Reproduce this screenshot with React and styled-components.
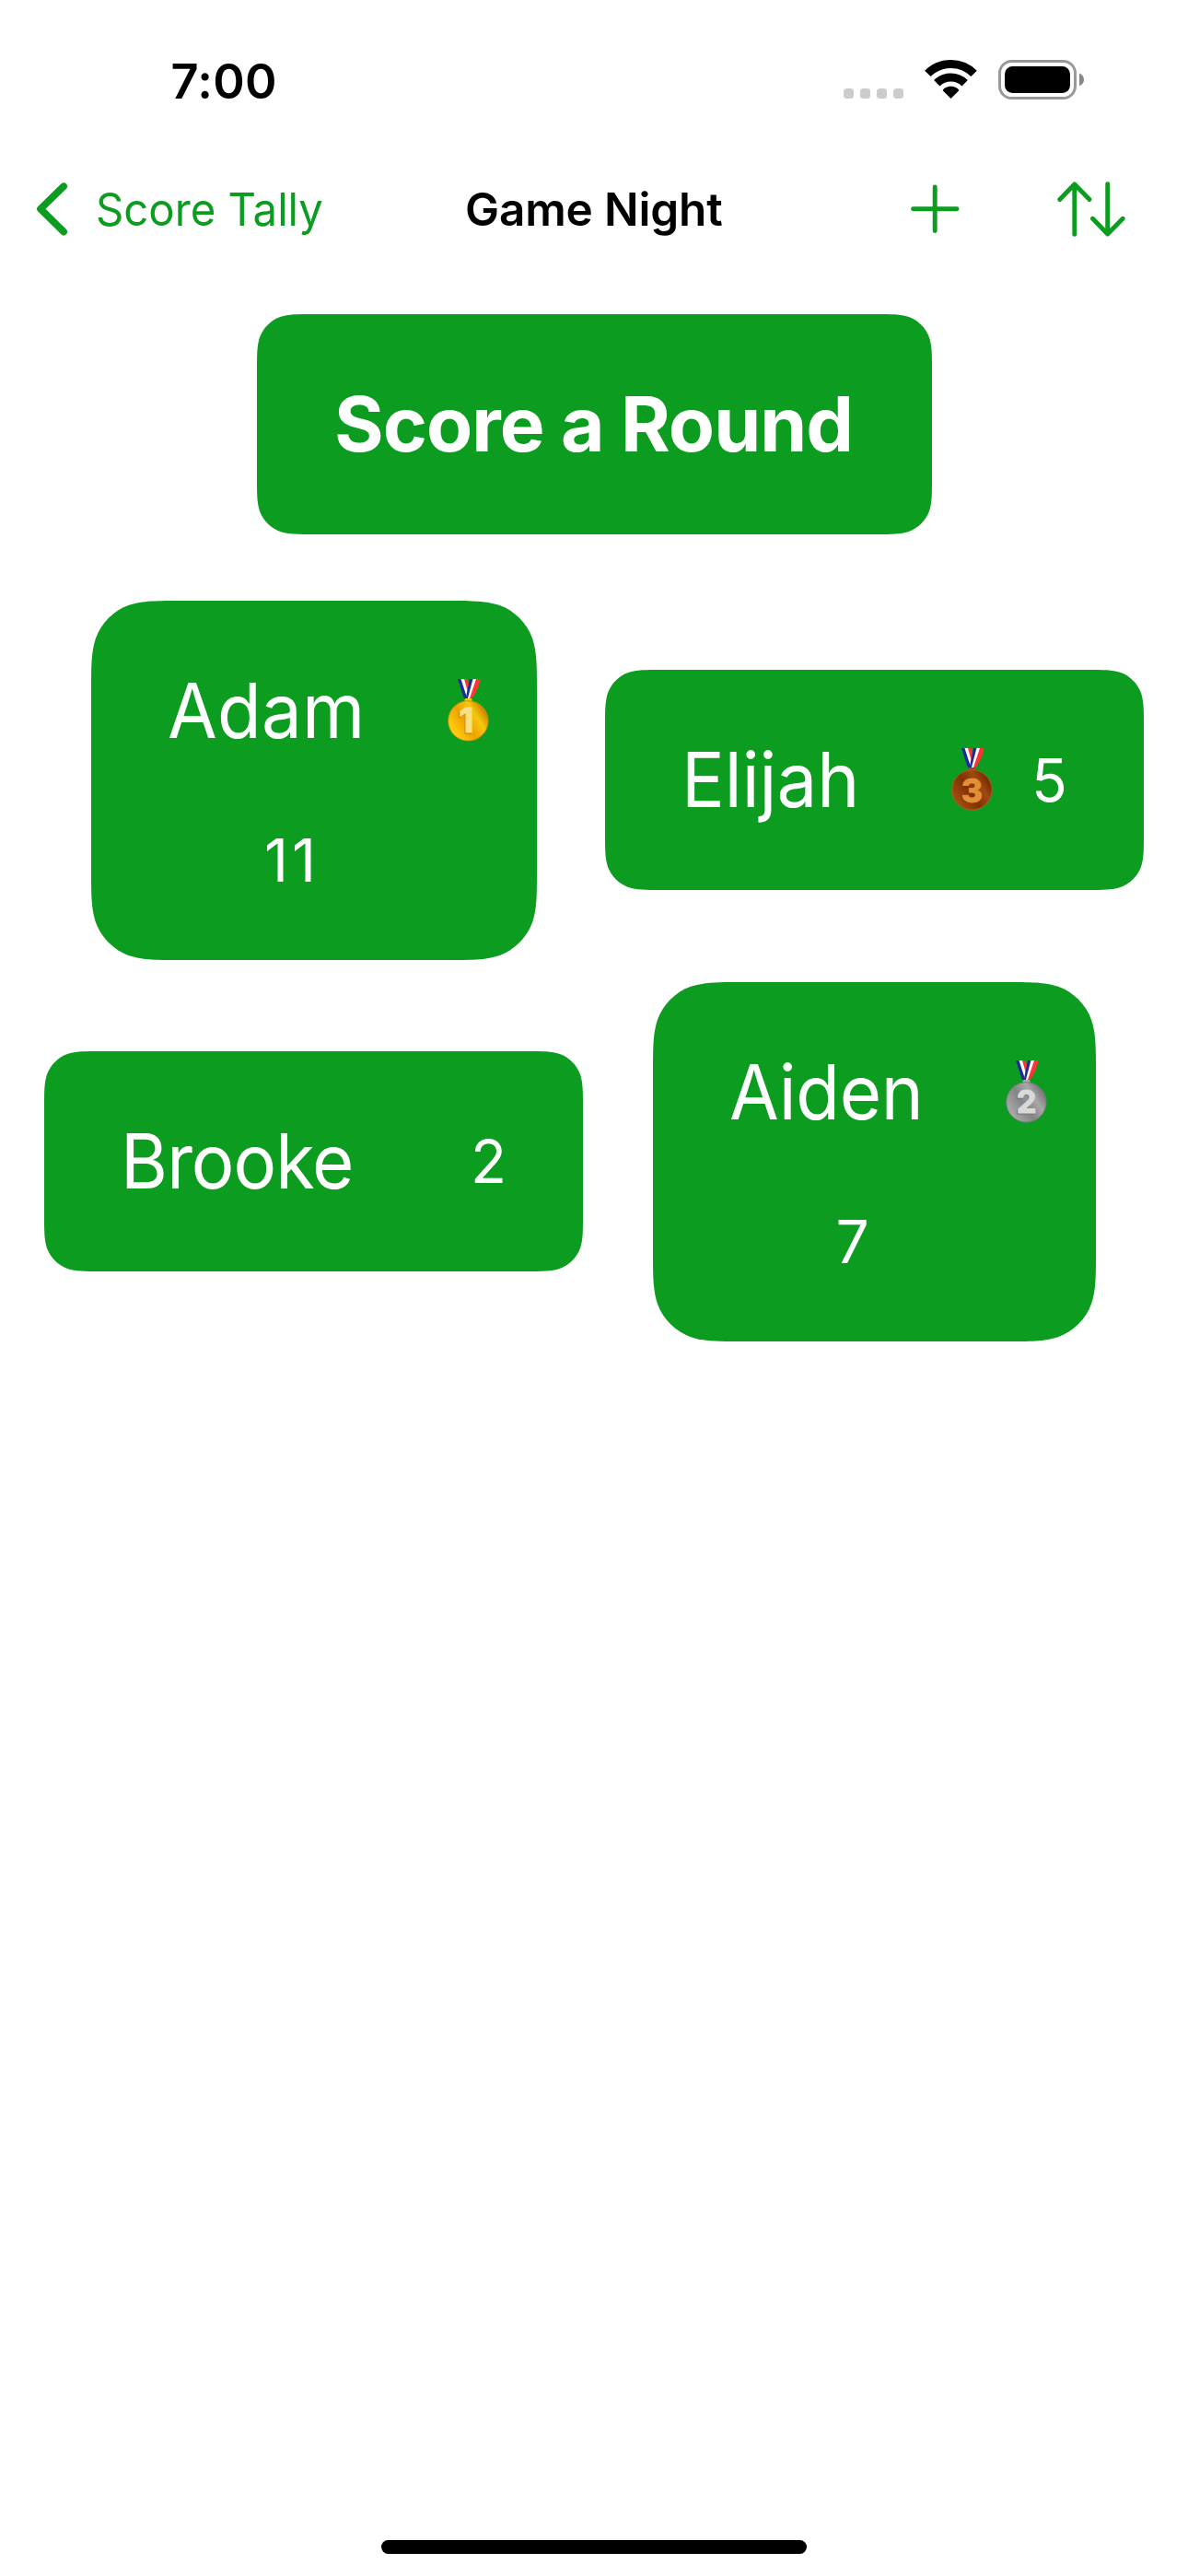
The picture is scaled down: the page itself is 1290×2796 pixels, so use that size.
import React from "react";
import styled, { createGlobalStyle } from "styled-components";

const GREEN = "#0c9c20";

const GlobalStyle = createGlobalStyle`
  * { box-sizing: border-box; }
  html, body { margin: 0; background: #fff; }
  body { font-family: Inter, "Liberation Sans", sans-serif; }
`;

// Continuous-curvature rounded rectangle, as iOS draws its corners.
const continuousCorners = (w, h) => {
  const r = h / 6;
  const a = 1.52866 * r;
  const b = 1.08849 * r;
  const c = 0.86841 * r;
  const d = 0.63149 * r;
  const e = 0.07491 * r;
  const f = 0.37282 * r;
  const g = 0.16906 * r;
  return [
    `M${a} 0L${w - a} 0`,
    `C${w - b} 0 ${w - c} 0 ${w - d} ${e}`,
    `C${w - f} ${g} ${w - g} ${f} ${w - e} ${d}`,
    `C${w} ${c} ${w} ${b} ${w} ${a}`,
    `L${w} ${h - a}`,
    `C${w} ${h - b} ${w} ${h - c} ${w - e} ${h - d}`,
    `C${w - g} ${h - f} ${w - f} ${h - g} ${w - d} ${h - e}`,
    `C${w - c} ${h} ${w - b} ${h} ${w - a} ${h}`,
    `L${a} ${h}`,
    `C${b} ${h} ${c} ${h} ${d} ${h - e}`,
    `C${f} ${h - g} ${g} ${h - f} ${e} ${h - d}`,
    `C0 ${h - c} 0 ${h - b} 0 ${h - a}`,
    `L0 ${a}`,
    `C0 ${b} 0 ${c} ${e} ${d}`,
    `C${g} ${f} ${f} ${g} ${d} ${e}`,
    `C${c} 0 ${b} 0 ${a} 0Z`,
  ].join("");
};

const Screen = styled.div`
  width: 1290px;
  height: 2796px;
  display: flex;
  flex-direction: column;
  background: #fff;
  overflow: hidden;
`;

const StatusBar = styled.header`
  height: 176px;
  padding: 0 113px 0 185.5px;
  display: flex;
  align-items: center;
  justify-content: space-between;
`;

const Clock = styled.time`
  font-size: 52.3px;
  line-height: 64px;
  font-weight: 600;
  letter-spacing: 0.3px;
  color: #000;
`;

const Indicators = styled.div`
  height: 43px;
  margin-bottom: 3px;
  display: flex;
  align-items: flex-end;
  gap: 23px;
`;

const SignalDots = styled.div`
  display: flex;
  gap: 7px;
  margin-bottom: 1px;
`;

const Dot = styled.span`
  width: 11px;
  height: 11px;
  border-radius: 3.5px;
  background: #ccc;
`;

const Icon = styled.svg`
  display: block;
  flex: none;
  width: ${(p) => p.$w}px;
  height: ${(p) => p.$h}px;
  margin-bottom: ${(p) => p.$lift || 0}px;
  overflow: visible;
`;

const NavBar = styled.nav`
  height: 102px;
  padding: 0 67px 0 38px;
  display: grid;
  grid-template-columns: 467px 1fr auto;
  align-items: center;
  color: ${GREEN};
`;

const BackButton = styled.a`
  display: flex;
  align-items: center;
  gap: 28px;
`;

const BackLabel = styled.span`
  font-size: 49.5px;
  line-height: 60px;
  white-space: nowrap;
  transform: scaleX(0.955);
  transform-origin: left;
`;

const Title = styled.h1`
  margin: 0;
  font-size: 49.5px;
  line-height: 60px;
  font-weight: 600;
  letter-spacing: -0.15px;
  white-space: nowrap;
  color: #000;
`;

const NavActions = styled.div`
  display: flex;
  align-items: center;
  gap: 105px;
`;

const Main = styled.main`
  flex: 1;
  padding: 63px 48px 0;
  display: flex;
  flex-direction: column;
  align-items: center;
  gap: 72px;
`;

const RoundButton = styled.button`
  width: 733px;
  height: 239px;
  margin-left: 1px;
  padding: 0 2px 0 0;
  border: 0;
  background: ${GREEN};
  clip-path: path("${continuousCorners(733, 239)}");
  color: #fff;
  font-family: inherit;
  font-size: 82px;
  font-weight: 700;
  line-height: 100px;
  letter-spacing: -1px;
`;

const Board = styled.section`
  display: grid;
  grid-template-columns: 585px 585px;
  gap: 24px;
  place-items: center;
`;

const Card = styled.article`
  width: ${(p) => p.$w}px;
  height: ${(p) => p.$h}px;
  clip-path: path("${(p) => continuousCorners(p.$w, p.$h)}");
  background: ${GREEN};
  color: #fff;
  display: flex;
`;

const WideCard = styled(Card)`
  align-items: center;
  margin-bottom: 1px;
  padding: 0 83px;
`;

const TallCard = styled(Card)`
  flex-direction: column;
  margin-left: ${(p) => (p.$w % 2 ? 0 : 1)}px;
`;

const NameRow = styled.div`
  height: 239px;
  padding-left: 83.3px;
  display: flex;
  align-items: center;
  gap: 78px;
`;

const Name = styled.h2`
  margin: 0;
  font-size: 82px;
  line-height: 100px;
  font-weight: 400;
  letter-spacing: ${(p) => p.$track || 0}px;
  white-space: nowrap;
  transform: scaleX(0.95);
  transform-origin: left;
`;

const Score = styled.span`
  font-size: 64px;
  line-height: 80px;
  letter-spacing: ${(p) => (p.$pair ? 4 : 0)}px;
`;

const InlineResult = styled.div`
  margin-left: auto;
  display: flex;
  align-items: center;
  gap: 42.5px;
`;

const ScoreRow = styled.div`
  padding: 3px 48px 0 0;
  display: flex;
  justify-content: center;
`;

const HomeArea = styled.footer`
  height: 39px;
  display: flex;
  justify-content: center;
`;

const HomeIndicator = styled.div`
  width: 462px;
  height: 15px;
  border-radius: 8px;
  background: #000;
`;

const MedalDigit = styled.text`
  font-family: Inter, "Liberation Sans", sans-serif;
  font-weight: 800;
  text-anchor: middle;
`;

const MEDALS = {
  1: { stops: ["#ffd012", "#eda200", "#f9c60d", "#c98600"], digit: "#f8e084", shade: "#b57c00", rim: "#c98c08", size: 37, x: 20.2, base: 58 },
  2: { stops: ["#a9a9a9", "#858585", "#a8a8a8", "#787878"], digit: "#d9d9d9", shade: "#747474", rim: "#777", size: 34, x: 22.6, base: 57 },
  3: { stops: ["#a34d12", "#823000", "#9d4a14", "#752a00"], digit: "#e38f36", shade: "#6e2800", rim: "#b0601e", size: 36, x: 22.4, base: 58.6 },
};

function Medal({ place }) {
  const m = MEDALS[place];
  const id = `medal-${place}`;
  return (
    <Icon $w={45} $h={68} $lift={1} viewBox="0 0 45 68">
      <defs>
        <linearGradient id={id} x1="0.1" y1="0.85" x2="0.95" y2="0.3">
          <stop offset="0.05" stopColor={m.stops[0]} />
          <stop offset="0.45" stopColor={m.stops[1]} />
          <stop offset="0.75" stopColor={m.stops[2]} />
          <stop offset="1" stopColor={m.stops[3]} />
        </linearGradient>
      </defs>
      <path d="M17.5 0H21.5L25 12L22.5 19Z" fill="#ff3430" />
      <path d="M11 0H14.5L21 19L20 22.5L17.5 20Z" fill="#1c2a9c" />
      <path d="M14.5 0H18L22.5 16L21 20Z" fill="#fff" />
      <path d="M24 0H27.5L22.5 22H19.5Z" fill="#1c2a9c" />
      <path d="M27.5 0H31.5L24.5 22.5H21.5Z" fill="#fff" />
      <path d="M31 0H35.5C34 9 30 17 25 22.5H23.5Z" fill="#ff3430" />
      <rect x="18.5" y="21" width="8" height="4" rx="1.5" fill={m.stops[2]} />
      <circle cx="22.4" cy="45.4" r="21.7" fill={`url(#${id})`} stroke={m.rim} strokeWidth="0.9" />
      <MedalDigit x={m.x - 0.9} y={m.base + 0.5} fontSize={m.size} fill={m.shade} stroke={m.shade} strokeWidth="1">{place}</MedalDigit>
      <MedalDigit x={m.x} y={m.base} fontSize={m.size} fill={m.digit} stroke={m.digit} strokeWidth="0.8">{place}</MedalDigit>
    </Icon>
  );
}

const WifiIcon = () => (
  <Icon $w={57} $h={42} $lift={1} viewBox="0 0 57 42">
    <g fill="none" stroke="#000" strokeWidth="9">
      <path d="M3.4 14.9A35.5 35.5 0 0 1 53.6 14.9" />
      <path d="M13.3 25.2A21.5 21.5 0 0 1 43.7 25.2" />
    </g>
    <path d="M28.5 42L19.7 33.3C22 27.2 35 27.2 37.3 33.3Z" />
  </Icon>
);

const BatteryIcon = () => (
  <Icon $w={93} $h={43} viewBox="0 0 93 43">
    <rect x="1.5" y="1.5" width="82" height="40" rx="13" fill="none" stroke="#999" strokeWidth="3" />
    <rect x="7" y="7" width="71" height="29" rx="8.5" />
    <path d="M88 14.8C94.7 17 94.7 26 88 28.2Z" fill="#868686" />
  </Icon>
);

const ChevronIcon = () => (
  <Icon $w={38} $h={60} viewBox="0 0 38 60">
    <path d="M31.1 5.3L6 29.8L31.1 54.5" fill="none" stroke={GREEN} strokeWidth="7.8" strokeLinecap="round" strokeLinejoin="round" />
  </Icon>
);

const PlusIcon = () => (
  <Icon $w={54} $h={54} viewBox="0 0 54 54">
    <path d="M3.5 26.7H51M27.2 3V50.5" fill="none" stroke={GREEN} strokeWidth="4.9" strokeLinecap="round" />
  </Icon>
);

const SortIcon = () => (
  <Icon $w={76} $h={62} viewBox="0 0 76 62">
    <g fill="none" stroke={GREEN} strokeWidth="4.9" strokeLinecap="round" strokeLinejoin="round">
      <path d="M19.8 58.4V4M3.8 20.5L19.8 4L36 20.5" />
      <path d="M55.7 3.6V58M39.5 41.3L55.7 58L72.2 41.3" />
    </g>
  </Icon>
);

const players = [
  { name: "Adam", score: 11, place: 1, tall: true, w: 484, track: 0.3 },
  { name: "Elijah", score: 5, place: 3, w: 585 },
  { name: "Brooke", score: 2, w: 585, track: -1.15 },
  { name: "Aiden", score: 7, place: 2, tall: true, w: 481, track: -0.35 },
];

function PlayerCard({ name, score, place, tall, w, track }) {
  if (tall) {
    return (
      <TallCard $w={w} $h={390}>
        <NameRow>
          <Name $track={track}>{name}</Name>
          <Medal place={place} />
        </NameRow>
        <ScoreRow>
          <Score $pair={score > 9}>{score}</Score>
        </ScoreRow>
      </TallCard>
    );
  }
  return (
    <WideCard $w={w} $h={239}>
      <Name $track={track}>{name}</Name>
      <InlineResult>
        {place && <Medal place={place} />}
        <Score>{score}</Score>
      </InlineResult>
    </WideCard>
  );
}

export default function App() {
  return (
    <Screen>
      <GlobalStyle />
      <StatusBar>
        <Clock>7:00</Clock>
        <Indicators>
          <SignalDots>
            <Dot />
            <Dot />
            <Dot />
            <Dot />
          </SignalDots>
          <WifiIcon />
          <BatteryIcon />
        </Indicators>
      </StatusBar>
      <NavBar>
        <BackButton>
          <ChevronIcon />
          <BackLabel>Score Tally</BackLabel>
        </BackButton>
        <Title>Game Night</Title>
        <NavActions>
          <PlusIcon />
          <SortIcon />
        </NavActions>
      </NavBar>
      <Main>
        <RoundButton>Score a Round</RoundButton>
        <Board>
          {players.map((p) => (
            <PlayerCard key={p.name} {...p} />
          ))}
        </Board>
      </Main>
      <HomeArea>
        <HomeIndicator />
      </HomeArea>
    </Screen>
  );
}
